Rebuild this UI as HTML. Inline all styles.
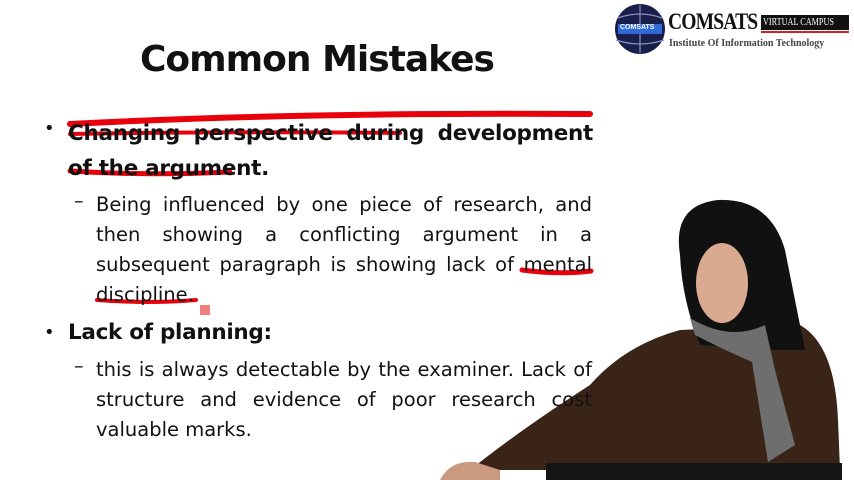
<!DOCTYPE html>
<html><head><style>
body{margin:0;width:854px;height:480px;overflow:hidden;background:#fff;position:relative;font-family:"DejaVu Sans","Liberation Sans",sans-serif;color:#111}
.a{position:absolute;white-space:nowrap}
.j{position:absolute;left:96px;width:496px;text-align:justify;text-align-last:justify;font-size:19.5px;line-height:30px}
</style></head><body>
<svg class="a" style="left:0;top:0" width="854" height="480">
<path d="M70 124 Q300 112 590 114" stroke="#e8000a" stroke-width="6" fill="none" stroke-linecap="round"/>
<path d="M70 134 Q230 131 400 133" stroke="#e8000a" stroke-width="4" fill="none" stroke-linecap="round"/>
<path d="M70 171 Q150 176 230 172" stroke="#e8000a" stroke-width="5" fill="none" stroke-linecap="round"/>
<path d="M522 270 Q560 275 591 271" stroke="#e8000a" stroke-width="5" fill="none" stroke-linecap="round"/>
<path d="M97 300 Q150 304 196 300" stroke="#e8000a" stroke-width="4" fill="none" stroke-linecap="round"/>
<rect x="200" y="305" width="10" height="10" fill="#f08080"/>
<path d="M470 470 Q520 430 590 385 Q625 345 680 330 L800 325 Q835 345 838 420 L840 470 Z" fill="#3a2418"/>
<path d="M680 255 Q672 205 718 200 Q770 198 785 250 Q795 300 805 350 L775 350 L700 345 Q682 300 680 255Z" fill="#111"/>
<ellipse cx="722" cy="283" rx="26" ry="40" fill="#d9a990"/>
<path d="M690 318 Q730 342 765 325 L775 370 L795 445 L768 462 L752 362 Q720 348 695 335Z" fill="#6e6e6e"/>
<path d="M440 480 Q450 460 475 462 L500 470 L500 480Z" fill="#c99a80"/>
<rect x="546" y="463" width="296" height="17" fill="#151515"/>
<circle cx="640" cy="29" r="25" fill="#1a1f4a"/>
<path d="M618 18 Q640 10 662 18 M616 40 Q640 48 664 40 M640 5 V53" stroke="#8890c0" stroke-width="1.2" fill="none"/>
<rect x="618" y="24" width="44" height="10" fill="#2e6ad8"/>
<rect x="761" y="15" width="88" height="15" fill="#111"/>
<rect x="761" y="31" width="88" height="2" fill="#d02020"/>
</svg>
<div class="a" style="left:620px;top:24px;font:bold 7px 'Liberation Sans',sans-serif;color:#fff">COMSATS</div>
<div class="a" style="left:668px;top:9px;font:bold 23px 'Liberation Serif',serif;letter-spacing:-1px;transform:scaleX(.85);transform-origin:left">COMSATS</div>
<div class="a" style="left:763px;top:17px;font:10px 'Liberation Serif',serif;color:#fff;transform:scaleX(.82);transform-origin:left">VIRTUAL CAMPUS</div>
<div class="a" style="left:669px;top:38px;font:bold 10px 'Liberation Serif',serif;color:#444">Institute Of Information Technology</div>
<div class="a" style="left:140px;top:39px;font:bold 36px 'DejaVu Sans',sans-serif;letter-spacing:-1px">Common Mistakes</div>
<div class="a" style="left:44px;top:118px;font-size:18px">•</div>
<div class="a" style="left:68px;top:116px;font:bold 21.5px 'DejaVu Sans',sans-serif;line-height:35px;width:525px;text-align:justify;white-space:normal;letter-spacing:-.3px">Changing perspective during development of the argument.</div>
<div class="a" style="left:74px;top:190px;font-size:19px">–</div>
<div class="j" style="top:190px">Being influenced by one piece of research, and</div>
<div class="j" style="top:220px">then showing a conflicting argument in a</div>
<div class="j" style="top:250px">subsequent paragraph is showing lack of mental</div>
<div class="a" style="left:96px;top:280px;font-size:19.5px;line-height:30px">discipline.</div>
<div class="a" style="left:44px;top:322px;font-size:18px">•</div>
<div class="a" style="left:68px;top:320px;font:bold 21.5px 'DejaVu Sans',sans-serif;letter-spacing:-.3px">Lack of planning:</div>
<div class="a" style="left:74px;top:355px;font-size:19px">–</div>
<div class="j" style="top:355px">this is always detectable by the examiner. Lack of</div>
<div class="j" style="top:385px">structure and evidence of poor research cost</div>
<div class="a" style="left:96px;top:415px;font-size:19.5px;line-height:30px">valuable marks.</div>
</body></html>
